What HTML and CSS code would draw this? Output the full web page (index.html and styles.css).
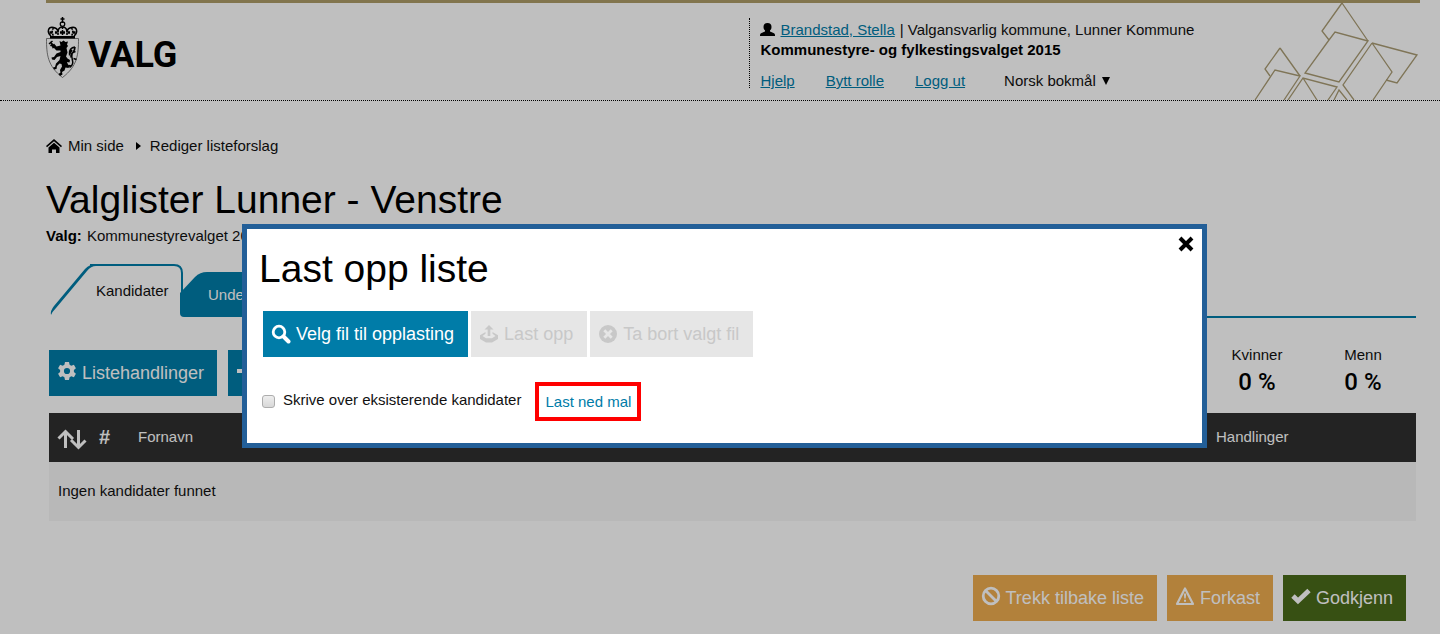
FILE: index.html
```html
<!DOCTYPE html>
<html lang="nb">
<head>
<meta charset="utf-8">
<meta name="viewport" content="width=device-width, initial-scale=1">
<title>Valglister Lunner - Venstre</title>
<link rel="stylesheet" href="styles.css">
</head>
<body>
<header class="site-header">
  <div class="brand">
    <svg class="crest" viewBox="0 0 66 122" aria-hidden="true">
      <path d="M33 0v12M29 4h8" stroke="#000" stroke-width="3"/>
      <circle cx="33" cy="14" r="4.500" fill="none" stroke="#000" stroke-width="2.500"/>
      <path d="M10 38C1 30 4 19 15 21c6 1 8 4 9 7 1-5 4-8 9-8s8 3 9 8c1-3 3-6 9-7 11-2 14 9 5 17" fill="none" stroke="#000" stroke-width="3"/>
      <path d="M15 22c-4 5-3 12 1 17M24 26v13M33 20v19M42 26v13M51 22c4 5 3 12-1 17" fill="none" stroke="#000" stroke-width="3" stroke-dasharray="4 2"/>
      <path d="M7 31h6M18 31h5M28 31h10M43 31h5M53 31h6" stroke="#000" stroke-width="5"/>
      <path d="M8 38h50v6H8z"/>
      <path d="M1 43h64c0 32-2 55-32 78C3 98 1 75 1 43z" fill="none" stroke="#555" stroke-width="1.500"/>
      <path d="M27 48l4 2 4-3 4 3 5-1-2 6 2 3-3 4 2 9-3 8 3 4 5 3-1 5-5-1 2 5 3 3-2 4-6-1-2 6-5 3 1 5-5 3-3-4 4-3-1-5 4-7-1-5-4-1-5 5-1 6-5 1-2-4 4-1 2-7 7-7 2-8-7 2-5 6-5-1-1-4 5-1 5-7 8-3 0-3-8 0-5-5-3 1-1-4-4-1 2-4 5 1 1-2 5 6 8-2z"/>
      <path d="M8 50l10 9M6 54l7-6" stroke="#000" stroke-width="3"/>
      <path d="M47 101c13-8 2-18 5-26 1-6 6-6 6-15M58 60c-8 1-12 6-11 14l5-8M59 69c-7 2-10 7-9 12M55 83l6 2M45 97l6 1" fill="none" stroke="#000" stroke-width="3"/>
    </svg>
    <span class="brand-name">VALG</span>
  </div>
  <div class="user-panel">
    <p class="user-line">
      <svg class="icon-user" viewBox="0 0 15 14" aria-hidden="true"><ellipse cx="7.500" cy="4" rx="4" ry="4"/><path d="M5 7h5v1.500l3.500 1.500q1.500.700 1.500 2v1H0v-1q0-1.300 1.500-2L5 8.500z"/></svg>
      <a href="#">Brandstad, Stella</a>
      <span>| Valgansvarlig kommune, Lunner Kommune</span>
    </p>
    <p class="election">Kommunestyre- og fylkestingsvalget 2015</p>
    <nav class="user-nav" aria-label="Brukermeny">
      <a href="#">Hjelp</a>
      <a href="#">Bytt rolle</a>
      <a href="#">Logg ut</a>
      <span class="language">
        <select aria-label="Språk"><option>Norsk bokmål</option></select>
        <svg viewBox="0 0 8 8" aria-hidden="true"><path d="M0 0h8L4 8z"/></svg>
      </span>
    </nav>
  </div>
  <svg class="ornament" viewBox="0 0 166 98" aria-hidden="true">
    <g fill="none" stroke="#aa9c74" stroke-width="1.300">
      <path d="M88 1L68 29l7 9M88 1l26 38"/>
      <path d="M75 38l6-8 33 9-29 41-34-9z"/>
      <path d="M118 41l-29 42 11 15M118 41l45 12-20 28-11-3M118 41l20 29-19 28"/>
      <path d="M26 46L11 67l5 7M26 46l20 28"/>
      <path d="M1 98l20-30 25 6-16 24M34 98l15-22 34 9-9 13M49 76l14 22M80 98l5-10 8 10"/>
    </g>
  </svg>
</header>

<main class="page">
  <nav class="breadcrumb" aria-label="Brødsmuler">
    <svg class="icon-home" viewBox="0 0 16 14" aria-hidden="true"><path d="M8 0l8 7-1 1.300L8 2.300 1 8.300 0 7z"/><path d="M8 3.800l5.500 4.700V14H10v-3.500H6V14H2.500V8.500z"/></svg>
    <a href="#">Min side</a>
    <svg class="icon-caret" viewBox="0 0 5 8" aria-hidden="true"><path d="M0 0l5 4-5 4z"/></svg>
    <a href="#">Rediger listeforslag</a>
  </nav>
  <h1>Valglister Lunner - Venstre</h1>
  <p class="subtitle"><strong>Valg:</strong> Kommunestyrevalget 2015</p>

  <nav class="tabs" aria-label="Faner">
    <a class="tab tab-active" href="#" aria-current="page">
      <svg viewBox="0 0 134 54" aria-hidden="true"><path d="M41 1h84q8 0 8 8v28" fill="none" stroke="#007ca8" stroke-width="2"/><path d="M2 51q-1-4 3-9L36 5q5-5 11-5v2q-5 0-9 5L7 44q-4 4-5 7z" fill="#007ca8"/></svg>
      <span>Kandidater</span>
    </a>
    <a class="tab tab-next" href="#">
      <svg viewBox="0 0 145 46" aria-hidden="true"><path d="M0 21L15 5q5-5 12-5h113q5 0 5 5v40H4q-4 0-4-4z" fill="#007ca8"/></svg>
      <span>Under</span>
    </a>
    <span class="tab-rule"></span>
  </nav>

  <section class="toolbar">
    <button class="btn btn-blue" type="button">
      <svg viewBox="0 0 20 20" aria-hidden="true"><path fill-rule="evenodd" d="M8 1h4l.600 2.700 1.700 1 2.600-.900 2 3.400-2 1.800v2l2 1.800-2 3.400-2.600-.900-1.700 1L12 19H8l-.600-2.700-1.700-1-2.600.900-2-3.400 2-1.800V9l-2-1.800 2-3.400 2.600.900 1.700-1zM10 6.900a3.100 3.100 0 1 0 0 6.200 3.100 3.100 0 0 0 0-6.200z"/></svg>
      Listehandlinger
    </button>
    <button class="btn btn-blue" type="button" aria-label="Ny kandidat">
      <svg viewBox="0 0 20 20" aria-hidden="true"><path d="M8 2h4v6h7v4h-7v6H8v-6H1V8h7z"/></svg>
    </button>
    <dl class="stats">
      <div><dt>Kvinner</dt><dd>0 %</dd></div>
      <div><dt>Menn</dt><dd>0 %</dd></div>
    </dl>
  </section>

  <table class="candidates">
    <thead>
      <tr>
        <th class="col-sort"><svg viewBox="0 0 30 21" role="img" aria-label="Sorter"><path d="M8.500 19V3M1.500 9.500L8.500 2.500l7.500 7.500M21.500 1v17M14 11l7.500 7.500L28.500 11.500" fill="none" stroke="#fff" stroke-width="3"/></svg></th>
        <th class="col-number">#</th>
        <th>Fornavn</th>
        <th class="col-actions">Handlinger</th>
      </tr>
    </thead>
    <tbody>
      <tr><td colspan="4">Ingen kandidater funnet</td></tr>
    </tbody>
  </table>

  <footer class="actions">
    <button class="btn btn-orange" type="button">
      <svg viewBox="0 0 20 20" aria-hidden="true"><circle cx="10" cy="10" r="7.800" fill="none" stroke="#fff" stroke-width="2.800"/><path d="M4.500 4.500l11 11" stroke="#fff" stroke-width="2.800"/></svg>
      Trekk tilbake liste
    </button>
    <button class="btn btn-orange" type="button">
      <svg viewBox="0 0 20 20" aria-hidden="true"><path d="M10 2.500L18 18H2z" fill="none" stroke="#fff" stroke-width="2.200" stroke-linejoin="round"/><path d="M8.800 7.500h2.400l-.500 5H9.300zM9 13.700h2v2H9z"/></svg>
      Forkast
    </button>
    <button class="btn btn-green" type="button">
      <svg viewBox="0 0 20 20" aria-hidden="true"><path d="M2 10l5 5L18 4.500" fill="none" stroke="#fff" stroke-width="4.800"/></svg>
      Godkjenn
    </button>
  </footer>
</main>

<div class="backdrop">
  <section class="dialog" role="dialog" aria-modal="true" aria-labelledby="dialog-title">
    <button class="close" type="button" aria-label="Lukk"><svg viewBox="0 0 16 16" aria-hidden="true"><path d="M2 2l12 12M14 2L2 14" stroke="#000" stroke-width="4"/></svg></button>
    <h2 id="dialog-title">Last opp liste</h2>
    <div class="upload-actions">
      <button class="btn btn-blue" type="button">
        <svg viewBox="0 0 20 20" aria-hidden="true"><circle cx="8" cy="8" r="5.800" fill="none" stroke="#fff" stroke-width="2.800"/><path d="M12.500 12.500l5 5" stroke="#fff" stroke-width="4" stroke-linecap="round"/></svg>
        Velg fil til opplasting
      </button>
      <button class="btn btn-disabled" type="button" disabled>
        <svg viewBox="0 0 20 20" aria-hidden="true"><path d="M10 1l4.500 4.500h-3.200V12H8.700V5.500H5.500z"/><path d="M6.500 8L1 11.300v3.700l6 3.500h6l6-3.500v-3.700L13.500 8v1.800L16.500 12 13 14.300H7L3.500 12l3-2.200z"/></svg>
        Last opp
      </button>
      <button class="btn btn-disabled" type="button" disabled>
        <svg viewBox="0 0 20 20" aria-hidden="true"><circle cx="10" cy="10" r="9"/><path d="M6.300 6.300l7.400 7.400M13.700 6.300l-7.400 7.400" stroke="#e6e6e6" stroke-width="2.800"/></svg>
        Ta bort valgt fil
      </button>
    </div>
    <div class="options">
      <input type="checkbox" id="overwrite">
      <label for="overwrite">Skrive over eksisterende kandidater</label>
      <a class="template-link" href="#">Last ned mal</a>
    </div>
  </section>
</div>
</body>
</html>
```
FILE: styles.css
```css
* { box-sizing: border-box; }

body {
  margin: 0;
  background: #fff;
  color: #111;
  font: 15px/20px "Liberation Sans", Arial, sans-serif;
}

h1, h2, p, dl, dd { margin: 0; }

a { color: #007ca8; }

svg { display: block; flex: none; }

/* Header */
.site-header {
  position: relative;
  display: grid;
  grid-template-columns: 512fr 488fr;
  height: 101px;
  padding: 0 20px 0 46px;
  border-bottom: 1px dotted #000;
}

.site-header::before {
  content: "";
  position: absolute;
  top: 0;
  left: 46px;
  right: 20px;
  height: 3px;
  background: #ae9c69;
}

.brand {
  display: flex;
  align-items: flex-start;
  gap: 9px;
  padding-top: 17px;
}

.crest { width: 33px; height: 61px; }

.brand-name {
  color: #000;
  font: 700 36px/44px Roboto, sans-serif;
  padding-top: 16px;
}

.user-panel {
  align-self: start;
  height: 70px;
  margin-top: 18px;
  padding: 2px 0 0 10px;
  border-left: 1px dotted #000;
}

.user-line { display: flex; gap: 5px; align-items: center; white-space: nowrap; }

.icon-user { width: 15px; height: 14px; }

.election { color: #000; font-weight: 700; }

.user-nav { display: flex; gap: 31px; margin-top: 11px; }

.language { display: flex; align-items: center; gap: 6px; margin-left: 8px; }

.language svg { width: 8px; height: 8px; }

.language select {
  appearance: none;
  padding: 0;
  border: 0;
  background: none;
  color: #111;
  font: inherit;
}

.ornament {
  position: absolute;
  right: 20px;
  bottom: 0;
  width: 166px;
  height: 98px;
}

/* Page */
.page { padding: 35px 24px 12px 46px; }

.breadcrumb { display: flex; align-items: center; }

.breadcrumb a { color: inherit; text-decoration: none; }

.icon-home { width: 16px; height: 14px; margin-right: 6px; }

.icon-caret { width: 5px; height: 8px; margin: 0 9px 0 12px; }

h1, h2 {
  color: #000;
  font-size: 39px;
  font-weight: 400;
  line-height: 48px;
}

h1 { margin-top: 20px; }

.subtitle { margin-top: 2px; }

.subtitle strong { margin-right: 1px; color: #000; }

.tabs {
  display: flex;
  align-items: flex-end;
  height: 54px;
  margin: 18px 0 0 3px;
}

.tab { position: relative; text-decoration: none; }

.tab svg { position: absolute; inset: 0; width: 100%; height: 100%; }

.tab span { position: relative; }

.tab-active {
  width: 134px;
  height: 54px;
  padding: 17px 0 0 47px;
  color: #111;
}

.tab-next {
  width: 145px;
  height: 46px;
  margin-left: -3px;
  padding: 13px 0 0 28px;
  color: #fff;
}

.tab-rule { flex: 1; height: 2px; background: #007ca8; }

.toolbar { display: flex; gap: 11px; margin: 32px 0 0 3px; }

.btn {
  display: flex;
  align-items: center;
  gap: 5px;
  height: 46px;
  padding: 0 13px 0 8px;
  border: 0;
  color: #fff;
  font: 18px/20px "Liberation Sans", Arial, sans-serif;
  white-space: nowrap;
}

.btn svg { width: 20px; height: 20px; fill: currentColor; }

.page .btn svg { margin-bottom: 4px; }

.btn-blue { background: #007ca8; }
.btn-orange { background: #eeac4f; }
.btn-green { background: #4a6b1a; }
.btn-disabled { background: #e6e6e6; color: #c8c8c8; }

.stats { display: flex; margin-left: auto; text-align: center; }

.stats div { width: 106px; }

.stats dt { margin-top: -5px; }

.stats dd {
  margin-top: 4px;
  color: #000;
  font: 500 24px/26px Roboto, sans-serif;
}

.candidates {
  width: calc(100% - 3px);
  margin: 17px 0 0 3px;
  border-collapse: collapse;
  table-layout: fixed;
}

.candidates th {
  height: 49px;
  padding: 0 0 2px;
  background: #2f2f2f;
  color: #fff;
  font-weight: 400;
  text-align: left;
}

.candidates .col-sort { width: 50px; padding: 3px 0 0 8px; }
.candidates .col-sort svg { width: 30px; height: 21px; }
.candidates .col-number { width: 39px; font-size: 20px; font-weight: 700; }
.candidates .col-actions { width: 200px; }

.candidates td { height: 59px; padding: 0 9px 2px; background: #f6f6f6; }

.actions {
  display: flex;
  justify-content: flex-end;
  gap: 10px;
  margin: 54px 10px 0 0;
}

/* Dialog */
.backdrop {
  position: fixed;
  inset: 0;
  padding: 224px 233px 0 242px;
  background: rgba(0, 0, 0, .25);
}

.dialog {
  position: relative;
  padding: 16px 12px 22px;
  border: 5px solid #235f98;
  background: #fff;
}

.close {
  position: absolute;
  top: 7px;
  right: 8px;
  padding: 0;
  border: 0;
  background: none;
}

.close svg { width: 16px; height: 16px; }

.upload-actions { display: flex; gap: 3px; margin: 18px 0 0 4px; }

.upload-actions .btn { padding-right: 14px; }

.options { display: flex; align-items: center; margin: 25px 0 0 3px; }

.options label { margin: 0 14px 4px 8px; }

.options input {
  appearance: none;
  width: 13px;
  height: 13px;
  margin: 0;
  border: 1px solid #adadad;
  border-radius: 3px;
  background: linear-gradient(#eee, #d8d8d8);
}

.template-link {
  padding: 6px 6px 5px;
  border: 4px solid #f00;
  text-decoration: none;
}
```
